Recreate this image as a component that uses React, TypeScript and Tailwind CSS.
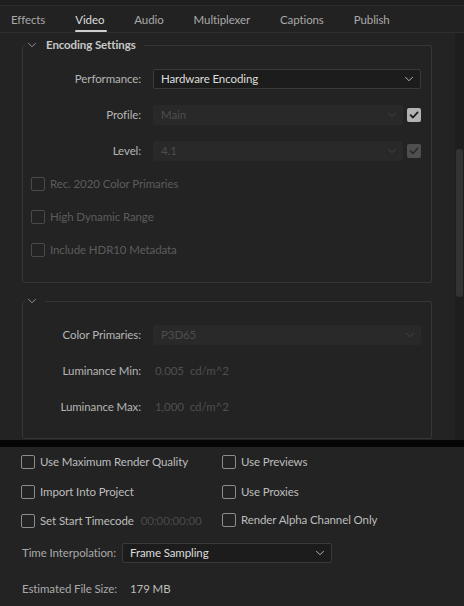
import React from "react";

const font = { fontFamily: "Lato, 'Noto Sans', sans-serif" };

function Chevron({ className = "" }: { className?: string }) {
  return (
    <svg width="14" height="14" viewBox="0 0 24 24" fill="none" stroke="currentColor" strokeWidth="1.6" strokeLinecap="round" strokeLinejoin="round" className={className}>
      <path d="m6 9 6 6 6-6" />
    </svg>
  );
}

function Box({ disabled = false }: { disabled?: boolean }) {
  return (
    <span
      className={`w-[14px] h-[14px] rounded-[2px] border-[1.5px] shrink-0 ${disabled ? "border-[#4a4a4a]" : "border-[#8c8c8c]"}`}
    />
  );
}

function CheckedBox({ disabled = false }: { disabled?: boolean }) {
  return (
    <span
      className={`w-[14px] h-[14px] rounded-[2px] shrink-0 flex items-center justify-center ${disabled ? "bg-[#4f4f4f]" : "bg-[#b3b3b3]"}`}
    >
      <svg width="10" height="10" viewBox="0 0 10 10" fill="none">
        <path d="M1.6 5.2 L4 7.5 L8.6 2.4" stroke={disabled ? "#2c2c2c" : "#1c1c1c"} strokeWidth="1.8" strokeLinecap="round" strokeLinejoin="round" />
      </svg>
    </span>
  );
}

function Row({ label, children }: { label: string; children: React.ReactNode }) {
  return (
    <div className="flex items-center h-[20px]">
      <div className="w-[118px] text-right text-[#b5b5b5] whitespace-nowrap">{label}</div>
      <div className="ml-[12px] flex-1 flex items-center">{children}</div>
    </div>
  );
}

export default function App() {
  return (
    <div className="w-[464px] h-[606px] bg-[#232323] overflow-hidden flex flex-col text-[11.5px] tracking-[-0.1px]" style={font}>
      <div className="h-[6px] bg-[#1f1f1f] border-b border-[#2d2d2d]" />
      {/* Tabs */}
      <div className="h-[27px] flex items-stretch pl-[11px] pt-[2px] gap-[30px] border-b border-[#2e2e2e] text-[#a9a9a9] bg-[#222222]">
        <div className="flex items-center">Effects</div>
        <div className="flex flex-col justify-center relative text-[#dedede]">
          <span>Video</span>
          <span className="absolute left-0 right-[-3px] bottom-[0px] h-[2px] bg-[#cfcfcf] rounded-full" />
        </div>
        <div className="flex items-center">Audio</div>
        <div className="flex items-center">Multiplexer</div>
        <div className="flex items-center">Captions</div>
        <div className="flex items-center">Publish</div>
      </div>

      {/* Scroll area */}
      <div className="h-[407px] flex">
        <div className="flex-1 pt-[4px]">
          {/* Encoding Settings */}
          <fieldset className="ml-[22px] w-[410px] border border-[#353535] rounded-[2px] px-0 pb-[22px]">
            <legend className="ml-[2px] pr-[8px] flex items-center h-[16px] font-bold text-[#c8c8c8]">
              <Chevron className="text-[#9a9a9a]" />
              <span className="ml-[7px]">Encoding Settings</span>
            </legend>
            <div className="mt-[16px] flex flex-col gap-[16px] pr-[10px]">
              <Row label="Performance:">
                <div className="flex-1 h-[20px] bg-[#1c1c1c] border border-[#3a3a3a] rounded-[2px] flex items-center justify-between pl-[7px] pr-[4px] text-[#dcdcdc]">
                  <span>Hardware Encoding</span>
                  <Chevron className="text-[#c0c0c0]" />
                </div>
              </Row>
              <Row label="Profile:">
                <div className="flex-1 h-[20px] bg-[#292929] rounded-[2px] flex items-center justify-between pl-[8px] pr-[4px] text-[#4d4d4d]">
                  <span>Main</span>
                  <Chevron className="text-[#444444]" />
                </div>
                <div className="ml-[4px]">
                  <CheckedBox />
                </div>
              </Row>
              <Row label="Level:">
                <div className="flex-1 h-[20px] bg-[#292929] rounded-[2px] flex items-center justify-between pl-[8px] pr-[4px] text-[#4d4d4d]">
                  <span>4.1</span>
                  <Chevron className="text-[#444444]" />
                </div>
                <div className="ml-[4px]">
                  <CheckedBox disabled />
                </div>
              </Row>
            </div>
            <div className="mt-[13px] flex flex-col gap-[13px] pl-[8px] text-[#5c5c5c]">
              {["Rec. 2020 Color Primaries", "High Dynamic Range", "Include HDR10 Metadata"].map((t) => (
                <div key={t} className="h-[20px] flex items-center gap-[5px]">
                  <Box disabled />
                  <span>{t}</span>
                </div>
              ))}
            </div>
          </fieldset>

          {/* HDR group */}
          <fieldset className="mt-[10px] ml-[22px] w-[410px] border border-[#353535] rounded-[2px] px-0 pb-[21px]">
            <legend className="ml-[2px] pr-[6px] flex items-center h-[16px]">
              <Chevron className="text-[#9a9a9a]" />
            </legend>
            <div className="mt-[16px] flex flex-col gap-[16px] pr-[10px]">
              <Row label="Color Primaries:">
                <div className="flex-1 h-[20px] bg-[#292929] rounded-[2px] flex items-center justify-between pl-[8px] pr-[4px] text-[#4d4d4d]">
                  <span>P3D65</span>
                  <Chevron className="text-[#444444]" />
                </div>
              </Row>
              <Row label="Luminance Min:">
                <div className="pl-[2px] flex items-center gap-[6px] text-[#4f4f4f]">
                  <span>0.005</span>
                  <span>cd/m^2</span>
                </div>
              </Row>
              <Row label="Luminance Max:">
                <div className="pl-[2px] flex items-center gap-[6px] text-[#4f4f4f]">
                  <span>1,000</span>
                  <span>cd/m^2</span>
                </div>
              </Row>
            </div>
          </fieldset>
        </div>
        {/* Scrollbar */}
        <div className="w-[9px] bg-[#1e1e1e] pt-[116px]">
          <div className="ml-[1px] w-[7px] h-[148px] bg-[#333333] rounded-[3px]" />
        </div>
      </div>

      {/* Separator */}
      <div className="h-[7px] bg-[#050505]" />

      {/* Bottom */}
      <div className="flex-1 pt-[5px] pl-[21px] text-[#bdbdbd]">
        <div className="grid grid-cols-[201px_1fr] gap-y-[10px]">
          <div className="h-[20px] flex items-center gap-[5px]"><Box /><span>Use Maximum Render Quality</span></div>
          <div className="h-[20px] flex items-center gap-[5px]"><Box /><span>Use Previews</span></div>
          <div className="h-[20px] flex items-center gap-[5px]"><Box /><span>Import Into Project</span></div>
          <div className="h-[20px] flex items-center gap-[5px]"><Box /><span>Use Proxies</span></div>
          <div className="h-[20px] flex items-center gap-[5px] -mt-[1px]">
            <Box />
            <span>Set Start Timecode</span>
            <span className="ml-[2px] text-[#4a4a4a]">00:00:00:00</span>
          </div>
          <div className="h-[20px] flex items-center gap-[5px] -mt-[2px]"><Box /><span>Render Alpha Channel Only</span></div>
        </div>
        <div className="mt-[12px] h-[20px] flex items-center">
          <span className="w-[101px] pl-[1px] text-[#a9a9a9] whitespace-nowrap">Time Interpolation:</span>
          <div className="w-[210px] h-[20px] bg-[#1c1c1c] border border-[#3a3a3a] rounded-[2px] flex items-center justify-between pl-[7px] pr-[4px] text-[#dcdcdc]">
            <span>Frame Sampling</span>
            <Chevron className="text-[#c0c0c0]" />
          </div>
        </div>
        <div className="mt-[16px] h-[20px] flex items-center text-[#a9a9a9]">
          <span className="w-[109px] pl-[1px] whitespace-nowrap">Estimated File Size:</span>
          <span className="text-[#bdbdbd]">179 MB</span>
        </div>
      </div>
    </div>
  );
}
